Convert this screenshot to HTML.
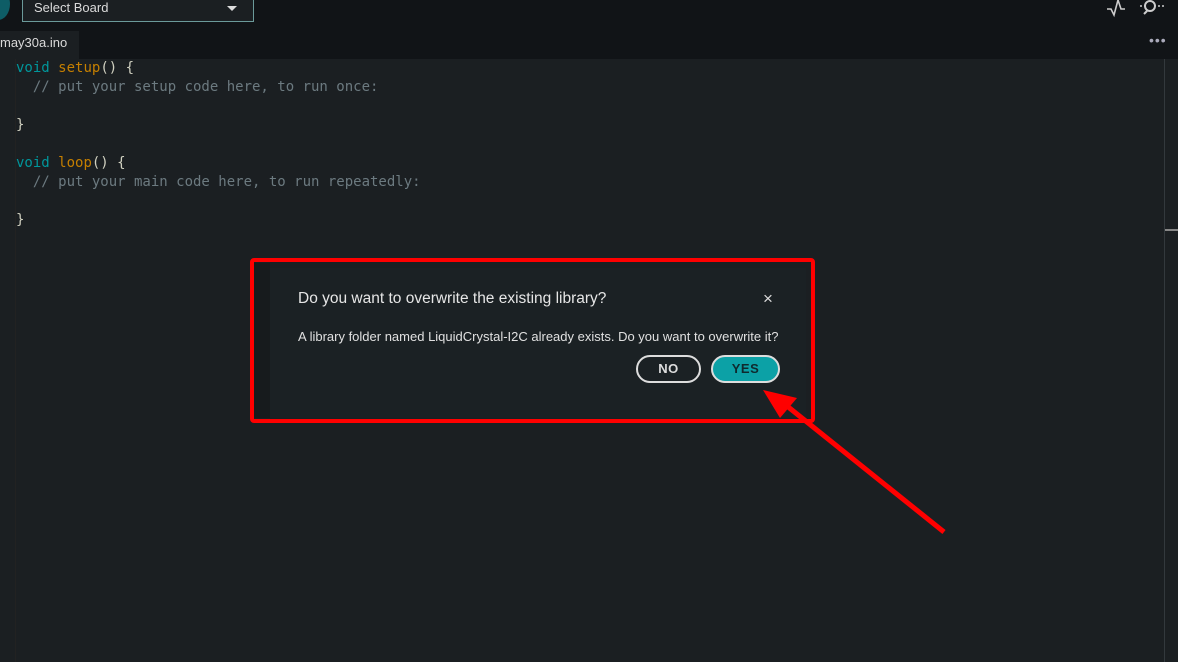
<!DOCTYPE html>
<html><head><meta charset="utf-8"><style>
*{margin:0;padding:0;box-sizing:border-box}
body{width:1178px;height:662px;background:#1b1f22;overflow:hidden;position:relative;font-family:"Liberation Sans",sans-serif}
.top{position:absolute;left:0;top:0;width:1178px;height:31px;background:#111417}
.tabs{position:absolute;left:0;top:31px;width:1178px;height:28px;background:#111417}
.tab{position:absolute;left:0;top:0;width:79px;height:28px;background:#1b1f22;color:#dadada;font-size:13px;line-height:24px}
.sel{position:absolute;left:22px;top:-6px;width:232px;height:28px;border:1px solid #6b9a9a;background:#1b1f22;color:#dadada;font-size:13px;padding:6px 0 0 11px;line-height:14px}
.sel:after{content:"";position:absolute;right:16px;top:11px;border-left:5px solid transparent;border-right:5px solid transparent;border-top:5px solid #ddd}
.circ{position:absolute;left:-14px;top:-12px;width:24px;height:32px;border-radius:50%;background:#0e5d66}
.code{position:absolute;left:16px;top:59px;font-family:"DejaVu Sans Mono","Liberation Mono",monospace;font-size:14px;line-height:19px;color:#aaa;white-space:pre}
.k{color:#00979c}.f{color:#c57f00}.c{color:#6c7a80}.b{color:#d0d0c0}
.gut{position:absolute;left:15px;top:59px;width:1px;height:603px;background:#222}
.sb{position:absolute;left:1164px;top:59px;width:1px;height:603px;background:#33393d}
.sbm{position:absolute;left:1165px;top:229px;width:13px;height:2px;background:#888}
.dlg{position:absolute;left:270px;top:268px;width:536px;height:150px;background:#1b2124}
.shade{position:absolute;left:254px;top:263px;width:16px;height:155px;background:#171b1d}
.red{position:absolute;left:250px;top:258px;width:565px;height:165px;border:4px solid #f00;border-radius:4px}
.t{position:absolute;left:298px;top:290px;color:#e6e6e6;font-size:15.5px}
.m{position:absolute;left:298px;top:329px;color:#e0e0e0;font-size:13px}
.x{position:absolute;left:763px;top:289px;color:#ddd;font-size:17px}
.btn{position:absolute;top:355px;height:28px;border:2px solid #ddd;border-radius:14px;font-weight:bold;font-size:13px;text-align:center;line-height:24px;letter-spacing:.5px}
</style></head><body>
<div class="top"><div class="circ"></div><div class="sel">Select Board</div>
<svg style="position:absolute;left:1106px;top:0" width="20" height="18"><path d="M1 9h4l3 6 4-15 3 9h4" stroke="#ccc" stroke-width="1.6" fill="none"/></svg>
<svg style="position:absolute;left:1138px;top:0" width="28" height="18"><circle cx="12" cy="6" r="5" stroke="#ccc" stroke-width="2" fill="none"/><path d="M9 11l-3 3" stroke="#ccc" stroke-width="2"/><circle cx="3" cy="6" r="1" fill="#ccc"/><circle cx="21" cy="6" r="1" fill="#ccc"/><circle cx="25" cy="6" r="1" fill="#ccc"/></svg>
</div>
<div class="tabs"><div class="tab">may30a.ino</div><div style="position:absolute;left:1149px;top:1px;color:#aab;font-size:14px;letter-spacing:1px">•••</div></div>
<div class="gut"></div><div class="sb"></div><div class="sbm"></div>
<div class="code"><span class="k">void</span> <span class="f">setup</span><span class="b">() {</span>
<span class="c">  // put your setup code here, to run once:</span>

<span class="b">}</span>

<span class="k">void</span> <span class="f">loop</span><span class="b">() {</span>
<span class="c">  // put your main code here, to run repeatedly:</span>

<span class="b">}</span></div>
<div class="shade"></div>
<div class="dlg"></div>
<div class="t">Do you want to overwrite the existing library?</div>
<div class="x">×</div>
<div class="m">A library folder named LiquidCrystal-I2C already exists. Do you want to overwrite it?</div>
<div class="btn" style="left:636px;width:65px;color:#ddd;background:#1b2124">NO</div>
<div class="btn" style="left:711px;width:69px;color:#0f2a2e;background:#0ca1a6">YES</div>
<div class="red"></div>
<svg style="position:absolute;left:0;top:0" width="1178" height="662"><line x1="944" y1="532" x2="782" y2="402" stroke="#f00" stroke-width="5"/><polygon points="763,390 797,398 780,418" fill="#f00"/></svg>
</body></html>
